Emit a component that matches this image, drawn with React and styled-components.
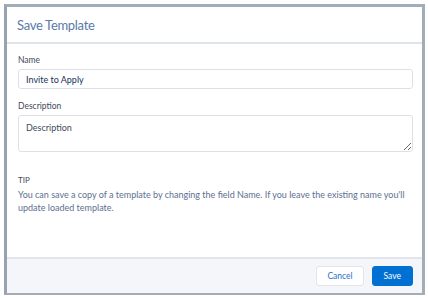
import styled, { createGlobalStyle } from "styled-components";

const GlobalStyle = createGlobalStyle`
  html, body {
    margin: 0;
    padding: 0;
    background: #fff;
  }
  body {
    font-family: Lato, "Open Sans", sans-serif;
  }
`;

const Page = styled.div`
  width: 428px;
  height: 300px;
  padding: 4px 3px 5px 4px;
  box-sizing: border-box;
`;

const Modal = styled.div`
  height: 100%;
  display: flex;
  flex-direction: column;
  background: #fff;
  border-top: 3px solid #a3adb8;
  border-left: 3px solid #98a3af;
  border-right: 3px solid #a3adb8;
  border-bottom: 2px solid #a3adb8;
  box-sizing: border-box;
`;

const Header = styled.div`
  height: 35px;
  padding: 0 10px;
  display: flex;
  align-items: center;
  border-bottom: 2px solid #dfe3ec;
`;

const Title = styled.h2`
  margin: 0;
  font-size: 13px;
  letter-spacing: -0.3px;
  font-weight: 400;
  color: #5a7aa8;
`;

const Body = styled.div`
  flex: 1;
  padding: 11px 9px 0 11px;
  display: flex;
  flex-direction: column;
`;

const Field = styled.div`
  display: flex;
  flex-direction: column;
  margin-bottom: 12px;
`;

const Label = styled.label`
  font-size: 8.5px;
  line-height: 11px;
  color: #3f4a5c;
  margin-bottom: 3px;
`;

const Input = styled.input`
  height: 20px;
  box-sizing: border-box;
  border: 1px solid #dde1e7;
  border-radius: 3px;
  padding: 0 7px;
  font-family: inherit;
  font-size: 9px;
  color: #16325c;
  outline: none;
`;

const TextArea = styled.textarea`
  height: 37px;
  box-sizing: border-box;
  border: 1px solid #dde1e7;
  border-radius: 3px;
  padding: 6px 7px;
  font-family: inherit;
  font-size: 9px;
  line-height: 12px;
  color: #16325c;
  outline: none;
  resize: vertical;

  &::placeholder {
    color: #3f4a5c;
  }
`;

const TipTitle = styled.div`
  font-size: 8px;
  line-height: 11px;
  color: #3f4a5c;
  margin-top: 11px;
`;

const TipText = styled.p`
  margin: 3px 0 0;
  font-size: 9px;
  line-height: 12.5px;
  color: #5d7090;
`;

const Footer = styled.div`
  height: 34px;
  padding: 0 9px;
  display: flex;
  align-items: center;
  justify-content: flex-end;
  gap: 8px;
  background: #f4f6f9;
  border-top: 2px solid #e0e5ee;
`;

const Button = styled.button`
  height: 20px;
  padding: 0 ${(p) => (p.$primary ? 11 : 10)}px;
  border-radius: 3px;
  font-family: inherit;
  font-size: 8.5px;
  cursor: pointer;
  border: 1px solid ${(p) => (p.$primary ? "#0070d2" : "#e0e5ee")};
  background: ${(p) => (p.$primary ? "#0070d2" : "#fff")};
  color: ${(p) => (p.$primary ? "#fff" : "#2a6fc4")};
`;

const App = () => {
  return (
    <Page>
      <GlobalStyle />
      <Modal>
        <Header>
          <Title>Save Template</Title>
        </Header>
        <Body>
          <Field>
            <Label>Name</Label>
            <Input defaultValue="Invite to Apply" />
          </Field>
          <Field>
            <Label>Description</Label>
            <TextArea placeholder="Description" />
          </Field>
          <TipTitle>TIP</TipTitle>
          <TipText>
            You can save a copy of a template by changing the field Name. If you
            leave the existing name you'll update loaded template.
          </TipText>
        </Body>
        <Footer>
          <Button>Cancel</Button>
          <Button $primary>Save</Button>
        </Footer>
      </Modal>
    </Page>
  );
};

export default App;
